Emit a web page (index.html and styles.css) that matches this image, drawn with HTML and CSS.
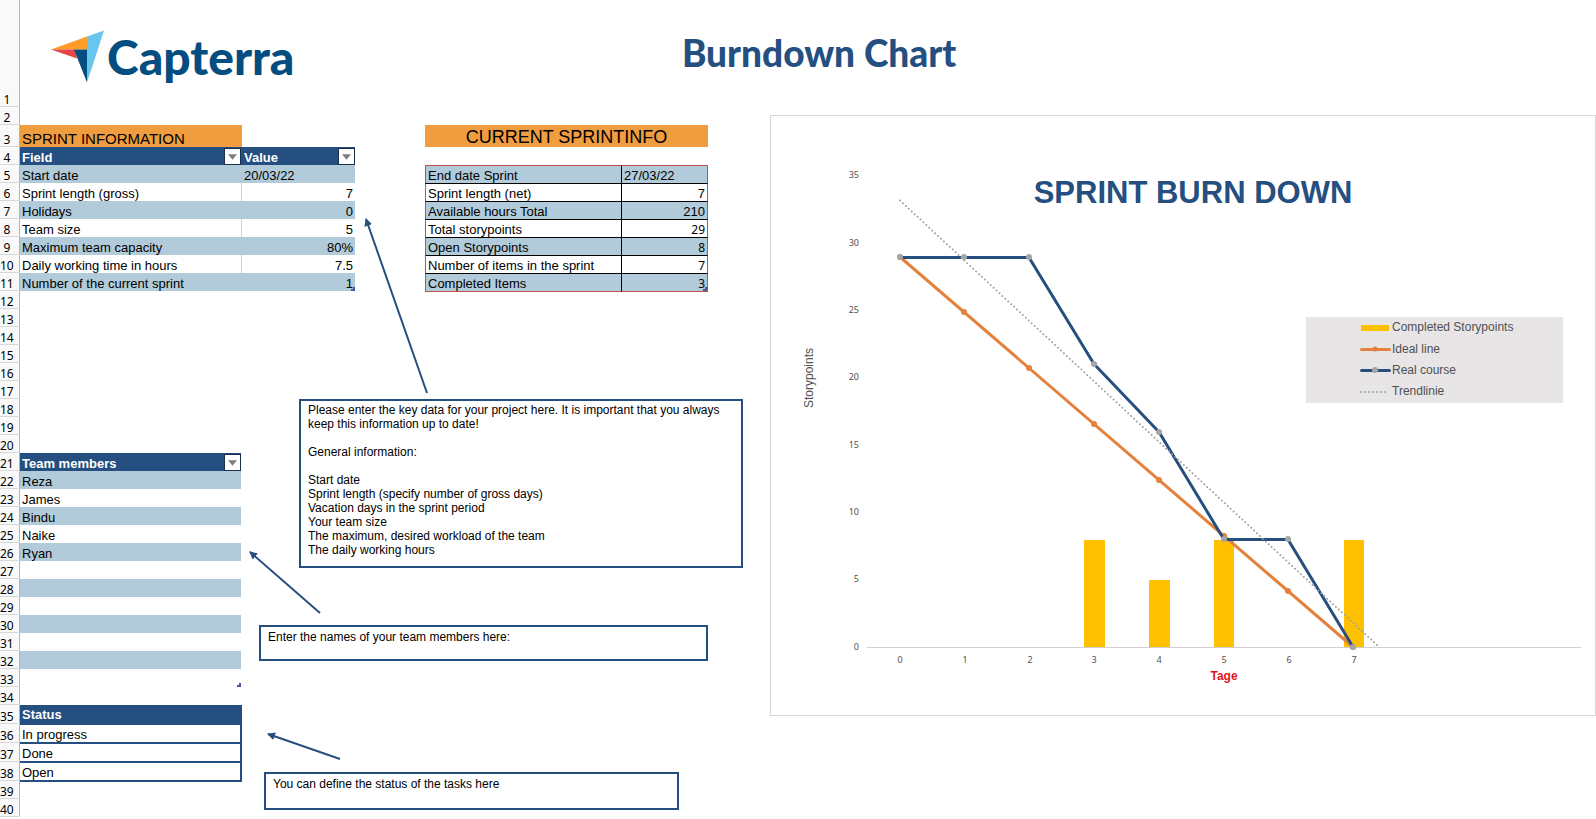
FILE: index.html
```html
<!DOCTYPE html>
<html lang="en">
<head>
<meta charset="utf-8">
<title>Burndown Chart</title>
<link rel="stylesheet" href="styles.css">
</head>
<body>
<main class="sheet">
  <ol class="row-heads">
    <li>1</li><li>2</li><li>3</li><li>4</li><li>5</li><li>6</li><li>7</li><li>8</li><li>9</li><li>10</li>
    <li>11</li><li>12</li><li>13</li><li>14</li><li>15</li><li>16</li><li>17</li><li>18</li><li>19</li><li>20</li>
    <li>21</li><li>22</li><li>23</li><li>24</li><li>25</li><li>26</li><li>27</li><li>28</li><li>29</li><li>30</li>
    <li>31</li><li>32</li><li>33</li><li>34</li><li>35</li><li>36</li><li>37</li><li>38</li><li>39</li><li>40</li>
  </ol>

  <header class="banner">
    <div class="logo">
      <svg class="logo-mark" viewBox="51 31 53 52" aria-hidden="true">
        <path fill="#68c5ed" d="M87 37 104 31 87 83z"/>
        <path fill="#ff9d28" d="M51 50 87 37V50z"/>
        <path fill="#e54747" d="M51 50H75L77 59z"/>
        <path fill="#044d80" d="M74 50H87V83z"/>
      </svg>
      <span class="logo-name">Capterra</span>
    </div>
    <h1 class="title">Burndown Chart</h1>
  </header>

  <h2 class="section-head sprint-head">SPRINT INFORMATION</h2>
  <table class="grid-table sprint-table">
    <thead>
      <tr>
        <th class="field-col" scope="col"><div class="head-cell">Field<button class="filter" type="button" aria-label="Filter Field"><svg viewBox="0 0 10 6"><path d="M0 0H10L5 6z"/></svg></button></div></th>
        <th scope="col"><div class="head-cell">Value<button class="filter" type="button" aria-label="Filter Value"><svg viewBox="0 0 10 6"><path d="M0 0H10L5 6z"/></svg></button></div></th>
      </tr>
    </thead>
    <tbody>
      <tr><td>Start date</td><td>20/03/22</td></tr>
      <tr><td>Sprint length (gross)</td><td class="num">7</td></tr>
      <tr><td>Holidays</td><td class="num">0</td></tr>
      <tr><td>Team size</td><td class="num">5</td></tr>
      <tr><td>Maximum team capacity</td><td class="num">80%</td></tr>
      <tr><td>Daily working time in hours</td><td class="num">7.5</td></tr>
      <tr><td>Number of the current sprint</td><td class="num">1</td></tr>
    </tbody>
  </table>

  <h2 class="section-head current-head">CURRENT SPRINTINFO</h2>
  <table class="current-table">
    <tbody>
      <tr><td class="name-col">End date Sprint</td><td>27/03/22</td></tr>
      <tr><td>Sprint length (net)</td><td class="num">7</td></tr>
      <tr><td>Available hours Total</td><td class="num">210</td></tr>
      <tr><td>Total storypoints</td><td class="num calc">29</td></tr>
      <tr><td>Open Storypoints</td><td class="num calc">8</td></tr>
      <tr><td>Number of items in the sprint</td><td class="num calc">7</td></tr>
      <tr><td>Completed Items</td><td class="num calc">3</td></tr>
    </tbody>
  </table>

  <table class="grid-table team-table">
    <thead>
      <tr><th scope="col"><div class="head-cell">Team members<button class="filter" type="button" aria-label="Filter Team members"><svg viewBox="0 0 10 6"><path d="M0 0H10L5 6z"/></svg></button></div></th></tr>
    </thead>
    <tbody>
      <tr><td>Reza</td></tr>
      <tr><td>James</td></tr>
      <tr><td>Bindu</td></tr>
      <tr><td>Naike</td></tr>
      <tr><td>Ryan</td></tr>
      <tr><td></td></tr>
      <tr><td></td></tr>
      <tr><td></td></tr>
      <tr><td></td></tr>
      <tr><td></td></tr>
      <tr><td></td></tr>
      <tr><td></td></tr>
    </tbody>
  </table>

  <table class="status-table">
    <thead><tr><th scope="col">Status</th></tr></thead>
    <tbody>
      <tr><td>In progress</td></tr>
      <tr><td>Done</td></tr>
      <tr><td>Open</td></tr>
    </tbody>
  </table>

  <aside class="note note-key">
    <p>Please enter the key data for your project here. It is important that you always keep this information up to date!</p>
    <p>General information:</p>
    <p>Start date<br>Sprint length (specify number of gross days)<br>Vacation days in the sprint period<br>Your team size<br>The maximum, desired workload of the team<br>The daily working hours</p>
  </aside>
  <aside class="note note-team"><p>Enter the names of your team members here:</p></aside>
  <aside class="note note-status"><p>You can define the status of the tasks here</p></aside>

  <figure class="chart">
    <svg viewBox="771 116 824 599" role="img" aria-label="Sprint burn down chart">
      <g class="y-labels">
        <text x="859" y="178">35</text>
        <text x="859" y="246">30</text>
        <text x="859" y="313">25</text>
        <text x="859" y="380">20</text>
        <text x="859" y="448">15</text>
        <text x="859" y="515">10</text>
        <text x="859" y="582">5</text>
        <text x="859" y="650">0</text>
      </g>
      <g class="bars">
        <rect x="1084" y="540" width="21" height="107"/>
        <rect x="1149" y="580" width="21" height="67"/>
        <rect x="1214" y="540" width="20" height="107"/>
        <rect x="1344" y="540" width="20" height="107"/>
      </g>
      <path class="axis" d="M867 647.5H1581"/>
      <g class="x-labels">
        <text x="900" y="663">0</text>
        <text x="965" y="663">1</text>
        <text x="1030" y="663">2</text>
        <text x="1094" y="663">3</text>
        <text x="1159" y="663">4</text>
        <text x="1224" y="663">5</text>
        <text x="1289" y="663">6</text>
        <text x="1354" y="663">7</text>
      </g>
      <path class="ideal" d="M900 257 1353 647"/>
      <g class="ideal-dots">
        <circle cx="900" cy="257" r="3"/><circle cx="964" cy="312" r="3"/><circle cx="1029" cy="368" r="3"/><circle cx="1094" cy="424" r="3"/>
        <circle cx="1159" cy="480" r="3"/><circle cx="1224" cy="536" r="3"/><circle cx="1288" cy="591" r="3"/><circle cx="1353" cy="647" r="3"/>
      </g>
      <path class="real" d="M900 257.5H1029L1094 364 1159 432 1224 539.5H1288L1353 647"/>
      <path class="trend" d="M900 200.500 1379 647"/>
      <g class="real-dots">
        <circle cx="900" cy="257" r="3"/><circle cx="964" cy="257" r="3"/><circle cx="1029" cy="257" r="3"/><circle cx="1094" cy="364" r="3"/>
        <circle cx="1159" cy="432" r="3"/><circle cx="1224" cy="539" r="3"/><circle cx="1288" cy="539" r="3"/><circle cx="1353" cy="647" r="3"/>
      </g>
      <text class="chart-title" x="1193" y="203">SPRINT BURN DOWN</text>
      <text class="y-title" transform="translate(813 378) rotate(-90)">Storypoints</text>
      <text class="x-title" x="1224" y="680">Tage</text>
      <g class="legend">
        <rect class="legend-box" x="1306" y="317" width="257" height="86"/>
        <rect class="legend-bar" x="1361" y="325" width="28" height="6"/>
        <path class="ideal" d="M1361.500 349.500H1389.500"/><circle cx="1375" cy="349" r="2.500" fill="#e4813c"/>
        <path class="real" d="M1361.500 370.500H1389.500"/><circle cx="1375" cy="370" r="3" fill="#a5a5a5"/>
        <path class="trend" d="M1361 392H1387"/>
        <text x="1392" y="331">Completed Storypoints</text>
        <text x="1392" y="353">Ideal line</text>
        <text x="1392" y="374">Real course</text>
        <text x="1392" y="395">Trendlinie</text>
      </g>
    </svg>
  </figure>

  <svg class="arrows" aria-hidden="true">
    <defs>
      <marker id="head" viewBox="0 0 8 8" refX="7" refY="4" markerWidth="8" markerHeight="8" markerUnits="userSpaceOnUse" orient="auto">
        <path d="M0 0 8 4 0 8z" fill="#264f7f"/>
      </marker>
    </defs>
    <path d="M427 393 366 219"/>
    <path d="M320 613 250 552"/>
    <path d="M340 759 268 734"/>
  </svg>
</main>
</body>
</html>
```

FILE: styles.css
```css
* {
  box-sizing: border-box;
}

body {
  margin: 0;
  background: #fff;
  color: #000;
  font: 13px/15px "Liberation Sans", Arial, sans-serif;
}

.sheet {
  position: relative;
  display: grid;
  grid-template-columns: 20px 222px 113px 70px 283px 62px minmax(0, 1fr);
  grid-template-rows: 107px 18px 22px repeat(31, 18px) repeat(4, 19px) 18px 18px;
  align-items: start;
}

/* Row numbers */
.row-heads {
  grid-column: 1;
  grid-row: 1 / -1;
  display: grid;
  grid-template-rows: subgrid;
  align-self: stretch;
  margin: 0;
  padding: 0;
  list-style: none;
  background: #f9f9f9;
  border-right: 1px solid #b4b4b4;
  font: 12px/12px "Noto Sans", sans-serif;
}

.row-heads li {
  display: flex;
  align-items: flex-end;
  justify-content: center;
  padding-right: 6px;
  border-bottom: 1px solid #d8d8d8;
}

/* Banner */
.banner {
  grid-column: 2 / -1;
  grid-row: 1;
  display: grid;
  grid-template-columns: 1fr auto 1fr;
  padding: 30px 0 0 22px;
}

.logo {
  display: flex;
  align-items: flex-start;
  gap: 3px;
  padding-left: 9px;
}

.logo-mark {
  width: 53px;
  height: 53px;
}

.logo-name {
  color: #044d80;
  font: 900 48px/54px Lato, sans-serif;
}

.title {
  margin: 0;
  color: #244f80;
  font: 900 37px/46px Lato, sans-serif;
}

/* Section headings */
.section-head {
  align-self: stretch;
  display: flex;
  align-items: flex-end;
  margin: 0;
  background: #f09d40;
  font-weight: normal;
}

.sprint-head {
  grid-column: 2;
  grid-row: 3;
  padding-left: 2px;
  font-size: 15px;
  line-height: 17px;
}

.current-head {
  grid-column: 5;
  grid-row: 3;
  justify-content: center;
  font-size: 18px;
  line-height: 20px;
}

/* Tables */
table {
  border-spacing: 0;
  width: 100%;
}

td,
th {
  height: 18px;
  padding: 0 2px;
  text-align: left;
  vertical-align: bottom;
}

th {
  background: #244f80;
  color: #fff;
}

.num {
  text-align: right;
}

.grid-table th {
  padding-right: 0;
}

.grid-table .field-col {
  width: 222px;
  padding-right: 1px;
}

.grid-table tbody tr:nth-child(odd) td {
  background: #b2cbda;
}

.head-cell {
  display: flex;
  align-items: flex-end;
  justify-content: space-between;
  height: 18px;
}

.filter {
  display: flex;
  align-items: center;
  justify-content: center;
  width: 17px;
  height: 17px;
  padding: 0;
  border: 1px solid #1b2f4c;
  background: #fff;
}

.filter svg {
  width: 9px;
  height: 6px;
  fill: #7f7f7f;
}

.sprint-table {
  grid-column: 2 / 4;
  grid-row: 4 / 12;
}

.sprint-table tbody tr:nth-child(even) td:first-child {
  border-right: 1px solid #d0d0d0;
}

.sprint-table tr:last-child td:last-child,
.team-table tr:last-child td,
.current-table tr:last-child td:last-child {
  background-image: linear-gradient(#4a569c, #4a569c), linear-gradient(#4a569c, #4a569c);
  background-position: right bottom;
  background-repeat: no-repeat;
  background-size: 4px 2px, 2px 4px;
}

.current-table {
  grid-column: 5;
  grid-row: 5 / 12;
}

.current-table td {
  border-top: 1px solid #000;
  border-left: 1px solid #000;
}

.current-table td:first-child {
  border-left-color: #c0504d;
}

.current-table td:last-child {
  border-right: 1px solid #c0504d;
}

.current-table tr:first-child td {
  border-top-color: #c0504d;
}

.current-table tr:last-child td {
  height: 19px;
  border-bottom: 1px solid #c0504d;
}

.current-table tr:nth-child(odd) td {
  background-color: #b2cbda;
}

.name-col {
  width: 196px;
}

.current-table .calc {
  font: 12px/14px "Noto Sans", sans-serif;
}

.team-table {
  grid-column: 2;
  grid-row: 21 / 34;
  padding-right: 1px;
}

.status-table {
  grid-column: 2;
  grid-row: 35 / 39;
}

.status-table th {
  height: 20px;
  padding-bottom: 3px;
}

.status-table td {
  height: 19px;
  border-right: 2px solid #244f80;
  border-bottom: 2px solid #244f80;
}

/* Notes */
.note {
  padding: 3px 7px 1px;
  border: 2px solid #264f7f;
  background: #fff;
  font-size: 12px;
  line-height: 14px;
}

.note p {
  margin: 0 0 14px;
}

.note-key {
  grid-column: 3 / 7;
  grid-row: 18 / 28;
  margin: 0 27px 0 57px;
  padding-top: 2px;
}

.note-key p:last-child {
  margin-bottom: 8px;
}

.note-team {
  grid-column: 3 / 6;
  grid-row: 30 / 33;
  margin: 10px 0 0 17px;
}

.note-status {
  grid-column: 3 / 6;
  grid-row: 38 / 41;
  margin: 10px 29px 0 22px;
  padding-bottom: 3px;
}

.arrows {
  position: absolute;
  inset: 0;
  width: 100%;
  height: 100%;
  pointer-events: none;
}

.arrows > path {
  fill: none;
  stroke: #264f7f;
  stroke-width: 2;
  marker-end: url(#head);
}

/* Chart */
.chart {
  grid-column: 7;
  grid-row: 2 / -1;
  margin: 8px 0 0;
  border: 1px solid #d6d6d6;
  font-size: 12px;
}

.chart svg {
  display: block;
  width: 100%;
  height: auto;
}

.y-labels,
.x-labels {
  fill: #505050;
  font: 9px "Noto Sans", sans-serif;
  text-anchor: end;
}

.x-labels,
.chart-title,
.y-title,
.x-title {
  text-anchor: middle;
}

.bars,
.legend-bar {
  fill: #ffc000;
}

.axis,
.ideal,
.real,
.trend {
  fill: none;
  stroke: #d0d0d0;
}

.ideal,
.real {
  stroke: #e4813c;
  stroke-width: 3;
  stroke-linecap: round;
  stroke-linejoin: round;
}

.real {
  stroke: #264f7f;
}

.trend {
  stroke: #a0a0a0;
  stroke-width: 2;
  stroke-linecap: round;
  stroke-dasharray: 0 4;
}

.ideal-dots {
  fill: #e4813c;
}

.real-dots {
  fill: #a5a5a5;
}

.chart-title {
  fill: #244f80;
  font-size: 31px;
  font-weight: bold;
}

.y-title,
.legend text {
  fill: #505050;
}

.x-title {
  fill: #e0141c;
  font-weight: bold;
}

.legend-box {
  fill: #e7e5e6;
}
```
